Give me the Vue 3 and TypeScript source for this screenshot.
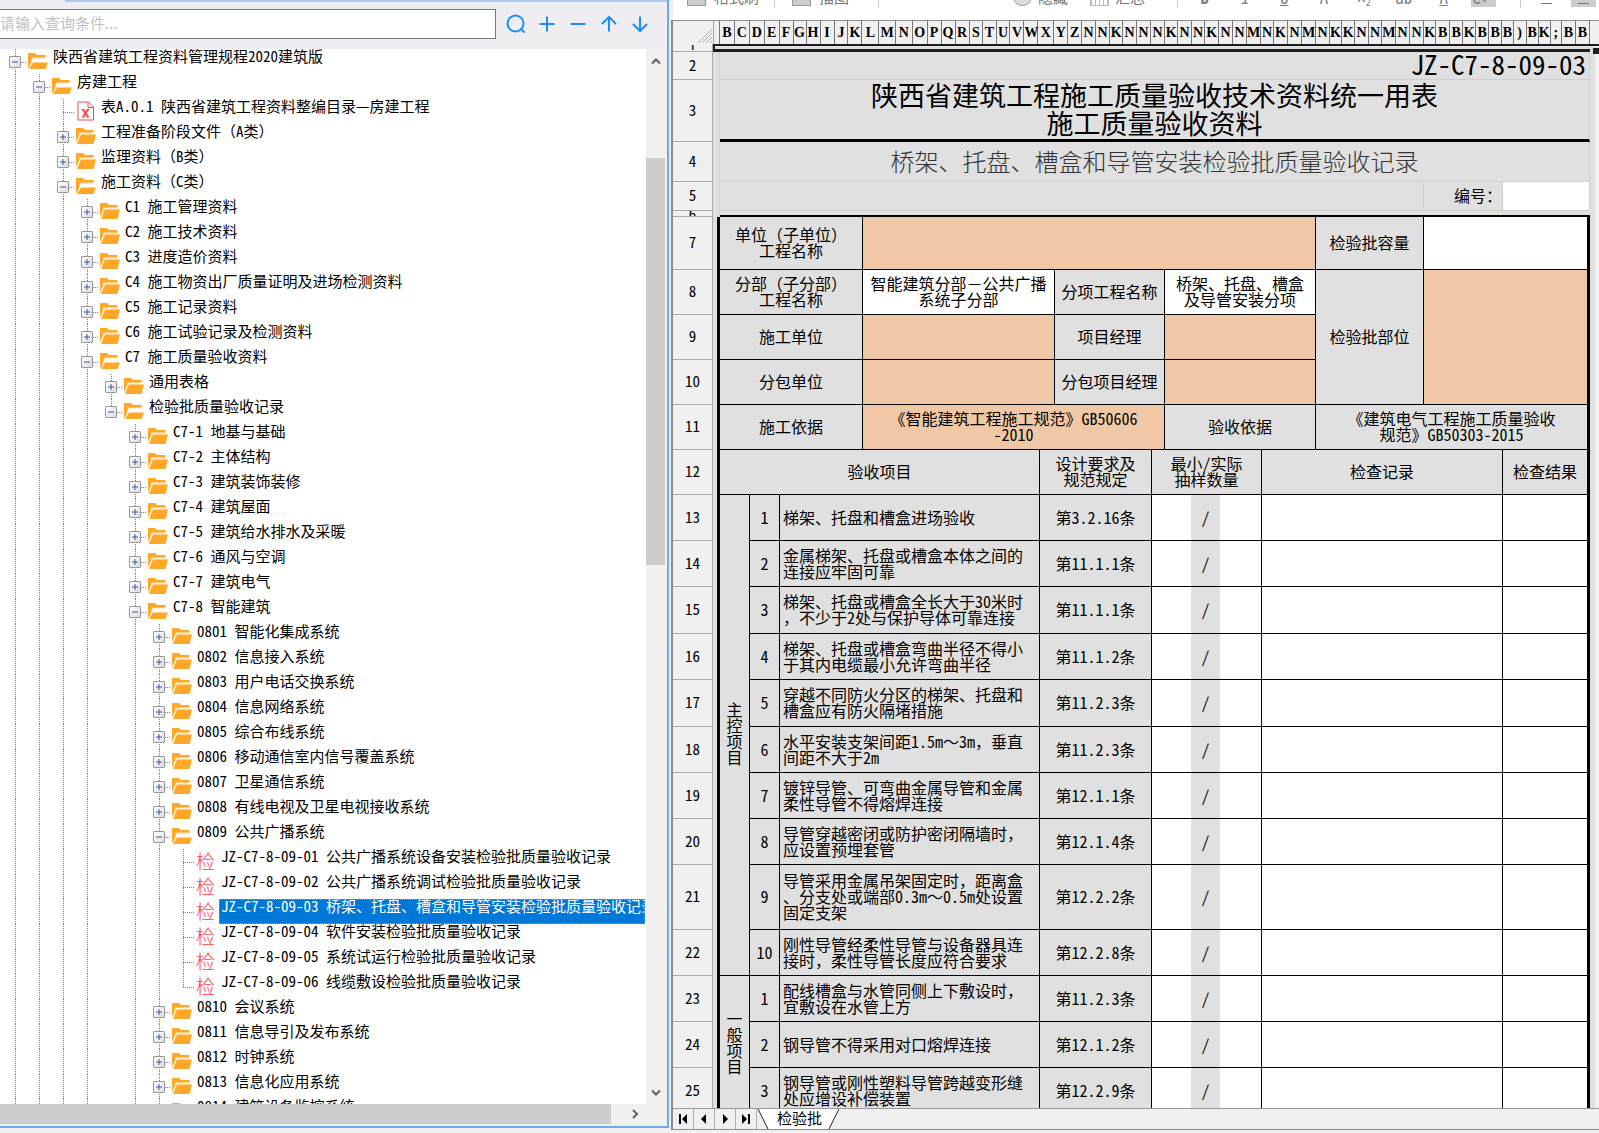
<script setup lang="ts">
import { h, ref } from 'vue'

type Kind = 'open' | 'closed' | 'doc' | 'check'
interface TreeNode { depth: number; kind: Kind; label: string }

const query = ref('')
const selected = ref('JZ-C7-8-09-03 桥架、托盘、槽盒和导管安装检验批质量验收记录')

// Sets letters and digits half an em wide while full-width punctuation keeps its em.
const Mixed = (props: { text: string }) =>
  h('span', props.text.split(/([（），：～－]+)/).map((part, i) => (i % 2 ? h('span', { class: 'fullwidth' }, part) : part)))
Mixed.props = ['text']

const n = (depth: number, kind: Kind, label: string): TreeNode => ({ depth, kind, label })

const nodes: TreeNode[] = [
  n(0, 'open', '陕西省建筑工程资料管理规程2020建筑版'),
  n(1, 'open', '房建工程'),
  n(2, 'doc', '表A.0.1 陕西省建筑工程资料整编目录—房建工程'),
  n(2, 'closed', '工程准备阶段文件（A类）'),
  n(2, 'closed', '监理资料（B类）'),
  n(2, 'open', '施工资料（C类）'),
  n(3, 'closed', 'C1 施工管理资料'),
  n(3, 'closed', 'C2 施工技术资料'),
  n(3, 'closed', 'C3 进度造价资料'),
  n(3, 'closed', 'C4 施工物资出厂质量证明及进场检测资料'),
  n(3, 'closed', 'C5 施工记录资料'),
  n(3, 'closed', 'C6 施工试验记录及检测资料'),
  n(3, 'open', 'C7 施工质量验收资料'),
  n(4, 'closed', '通用表格'),
  n(4, 'open', '检验批质量验收记录'),
  n(5, 'closed', 'C7-1 地基与基础'),
  n(5, 'closed', 'C7-2 主体结构'),
  n(5, 'closed', 'C7-3 建筑装饰装修'),
  n(5, 'closed', 'C7-4 建筑屋面'),
  n(5, 'closed', 'C7-5 建筑给水排水及采暖'),
  n(5, 'closed', 'C7-6 通风与空调'),
  n(5, 'closed', 'C7-7 建筑电气'),
  n(5, 'open', 'C7-8 智能建筑'),
  n(6, 'closed', '0801 智能化集成系统'),
  n(6, 'closed', '0802 信息接入系统'),
  n(6, 'closed', '0803 用户电话交换系统'),
  n(6, 'closed', '0804 信息网络系统'),
  n(6, 'closed', '0805 综合布线系统'),
  n(6, 'closed', '0806 移动通信室内信号覆盖系统'),
  n(6, 'closed', '0807 卫星通信系统'),
  n(6, 'closed', '0808 有线电视及卫星电视接收系统'),
  n(6, 'open', '0809 公共广播系统'),
  n(7, 'check', 'JZ-C7-8-09-01 公共广播系统设备安装检验批质量验收记录'),
  n(7, 'check', 'JZ-C7-8-09-02 公共广播系统调试检验批质量验收记录'),
  n(7, 'check', 'JZ-C7-8-09-03 桥架、托盘、槽盒和导管安装检验批质量验收记录'),
  n(7, 'check', 'JZ-C7-8-09-04 软件安装检验批质量验收记录'),
  n(7, 'check', 'JZ-C7-8-09-05 系统试运行检验批质量验收记录'),
  n(7, 'check', 'JZ-C7-8-09-06 线缆敷设检验批质量验收记录'),
  n(6, 'closed', '0810 会议系统'),
  n(6, 'closed', '0811 信息导引及发布系统'),
  n(6, 'closed', '0812 时钟系统'),
  n(6, 'closed', '0813 信息化应用系统'),
  n(6, 'closed', '0814 建筑设备监控系统'),
]

// Levels whose branch goes on below the last loaded node.
const unfinished = new Set([0, 1, 2, 3, 5, 6])

function continues(index: number, level: number): boolean {
  for (let i = index + 1; i < nodes.length; i++) {
    if (nodes[i].depth < level) return false
    if (nodes[i].depth === level) return true
  }
  return unfinished.has(level)
}

const letterWidths = [
  15, 15, 15, 15, 14, 13, 14, 14, 14, 14, 17, 17, 17, 15, 14, 14, 14, 14, 13, 14, 14, 14, 16, 14, 14,
  14, 14, 13, 14, 14, 14, 13, 14,
  13, 14, 14, 14, 14, 13, 14, 14, 14, 14, 12, 13, 14, 13, 14, 14, 14, 12,
  14, 13, 13, 13, 13, 11, 13, 12, 12, 11, 14, 14,
]
const letters = 'BCDEFGHIJKLMNOPQRSTUVWXYZNNKNNNKNNKNNMNKNMNKKNNMNNKBBKBBB)BK;BB'.split('')
const columns = letterWidths.map((width, i) => ({ width, letter: letters[i] }))

const cols = [40, 7, 30, 30, 83, 177, 15, 97, 13, 26, 29, 42, 54, 108, 79, 87, 9]

interface Item { row: number; no: number; text: string; rule: string; group?: string; span?: number; size?: string }
const items: Item[] = [
  { row: 13, no: 1, text: '梯架、托盘和槽盒进场验收', rule: '第3.2.16条', group: '主控项目', span: 10 },
  { row: 14, no: 2, text: '金属梯架、托盘或槽盒本体之间的\n连接应牢固可靠', rule: '第11.1.1条' },
  { row: 15, no: 3, text: '梯架、托盘或槽盒全长大于30米时\n，不少于2处与保护导体可靠连接', rule: '第11.1.1条', size: 'h47' },
  { row: 16, no: 4, text: '梯架、托盘或槽盒弯曲半径不得小\n于其内电缆最小允许弯曲半径', rule: '第11.1.2条' },
  { row: 17, no: 5, text: '穿越不同防火分区的梯架、托盘和\n槽盒应有防火隔堵措施', rule: '第11.2.3条', size: 'h47' },
  { row: 18, no: 6, text: '水平安装支架间距1.5m～3m，垂直\n间距不大于2m', rule: '第11.2.3条' },
  { row: 19, no: 7, text: '镀锌导管、可弯曲金属导管和金属\n柔性导管不得熔焊连接', rule: '第12.1.1条' },
  { row: 20, no: 8, text: '导管穿越密闭或防护密闭隔墙时，\n应设置预埋套管', rule: '第12.1.4条' },
  { row: 21, no: 9, text: '导管采用金属吊架固定时，距离盒\n、分支处或端部0.3m～0.5m处设置\n固定支架', rule: '第12.2.2条', size: 'h65' },
  { row: 22, no: 10, text: '刚性导管经柔性导管与设备器具连\n接时，柔性导管长度应符合要求', rule: '第12.2.8条' },
  { row: 23, no: 1, text: '配线槽盒与水管同侧上下敷设时，\n宜敷设在水管上方', rule: '第11.2.3条', group: '一般项目', span: 3 },
  { row: 24, no: 2, text: '钢导管不得采用对口熔焊连接', rule: '第12.1.2条' },
  { row: 25, no: 3, text: '钢导管或刚性塑料导管跨越变形缝\n处应增设补偿装置', rule: '第12.2.9条' },
]
</script>

<template>
  <div class="app">
    <section class="explorer">
      <div class="topline"></div>
      <form class="search" @submit.prevent>
        <input v-model="query" type="text" aria-label="查询条件" placeholder="请输入查询条件..." />
        <button type="submit" aria-label="查询">
          <svg width="22" height="22" viewBox="0 0 22 22"><circle cx="10.5" cy="10.5" r="8" /><path d="M15.5 15.5l4 4" /></svg>
        </button>
        <button type="button" aria-label="展开">
          <svg width="22" height="22" viewBox="0 0 22 22"><path d="M11 3.5v15M3.5 11h15" /></svg>
        </button>
        <button type="button" aria-label="收起">
          <svg width="22" height="22" viewBox="0 0 22 22"><path d="M3.5 11h15" /></svg>
        </button>
        <button type="button" aria-label="上一个">
          <svg width="22" height="22" viewBox="0 0 22 22"><path d="M11 18.500V4.500M4 11l7-7 7 7" /></svg>
        </button>
        <button type="button" aria-label="下一个">
          <svg width="22" height="22" viewBox="0 0 22 22"><path d="M11 3.500v14M4 11l7 7 7-7" /></svg>
        </button>
      </form>

      <div class="treearea">
        <ul class="tree" role="tree">
          <li v-for="(node, i) in nodes" :key="node.label" role="treeitem" class="node" @click="selected = node.label">
            <span v-for="level in node.depth" :key="level" class="guide" :class="{ line: continues(i, level - 1) }"></span>
            <span class="guide joint" :class="continues(i, node.depth) ? 'line' : 'half'">
              <button v-if="node.kind === 'open' || node.kind === 'closed'" type="button" class="toggle" :aria-label="node.kind === 'open' ? '收起' : '展开'">
                <svg width="10" height="10" viewBox="0 0 10 10">
                  <path d="M2 5h6" /><path v-if="node.kind === 'closed'" d="M5 2v6" />
                </svg>
              </button>
            </span>
            <svg v-if="node.kind === 'open'" class="icon" width="20" height="18" viewBox="0 0 20 18">
              <path fill="#ffa726" d="M0 1h7l2 2h8.500v3H5L1.200 15.500L0 16z" />
              <path fill="#fff" d="M4.500 6.500H18v3H4L2 14.500z" />
              <path fill="#ffe0b2" d="M4 5.500h13.500v1H4.500L2.500 12z" />
              <path fill="#ffa726" d="M5 10.500h15l-2.500 6.500H1z" />
            </svg>
            <svg v-else-if="node.kind === 'closed'" class="icon" width="20" height="18" viewBox="0 0 20 18">
              <path fill="#ffa726" d="M0 1h7l2 2h8.500v3H4L0 15.500z" />
              <path fill="#fff0d8" d="M3.500 5.500h15v2H5L1.500 16z" />
              <path fill="#ffa726" d="M5 7.500h15L17.500 17H1z" />
            </svg>
            <svg v-else-if="node.kind === 'doc'" class="icon doc" width="20" height="20" viewBox="0 0 20 20">
              <path d="M2 1h10.500l5 5v13H2z M12 1v5.500h5.500" />
              <path class="cross" d="M7 8.500l5 7.500M12 8.500l-5 7.500" />
              <path d="M5.500 8.500h3M10.500 8.500h3M5.500 16h3M10.500 16h3" />
            </svg>
            <span v-else class="icon check">检</span>
            <span class="label" :class="{ selected: node.label === selected }"><Mixed :text="node.label" /></span>
          </li>
        </ul>
        <div class="vbar">
          <svg width="12" height="12" viewBox="0 0 12 12"><path d="M2 8.500l4-4 4 4" /></svg>
          <div class="vthumb"></div>
          <svg class="down" width="12" height="12" viewBox="0 0 12 12"><path d="M2 3.500l4 4 4-4" /></svg>
        </div>
      </div>
      <div class="hbar">
        <div class="hthumb"></div>
        <svg width="12" height="12" viewBox="0 0 12 12"><path d="M4 2l4 4-4 4" /></svg>
      </div>
    </section>

    <section class="workbook">
      <div class="toolbar">
        <button type="button" class="tool t1"><i class="glyph solid"></i>格式刷</button>
        <i class="sep"></i>
        <button type="button" class="tool t2"><i class="glyph solid"></i>插图</button>
        <i class="sep"></i>
        <button type="button" class="tool t3"><i class="glyph eye"></i>隐藏</button>
        <button type="button" class="tool t4"><i class="glyph bars"></i>汇总</button>
        <i class="sep"></i>
        <div class="formats">
          <button type="button" class="fmt"><b>B</b></button>
          <button type="button" class="fmt"><em>I</em></button>
          <button type="button" class="fmt"><u>U</u></button>
          <button type="button" class="fmt">A</button>
          <button type="button" class="fmt">X<sub>2</sub></button>
          <button type="button" class="fmt">ab</button>
          <button type="button" class="fmt"><u>A</u></button>
          <button type="button" class="fmt on">C↵</button>
        </div>
        <i class="sep"></i>
        <div class="aligns">
          <button type="button" class="fmt" aria-label="左对齐"><i class="dash"></i></button>
          <button type="button" class="fmt on" aria-label="居中"><i class="dash"></i></button>
        </div>
      </div>

      <div class="sheet">
        <div class="colhead">
          <div class="corner">
            <svg width="16" height="16" viewBox="0 0 16 16"><path d="M1 15L15 1M5 15L15 5M9 15l6-6M13 15l2-2" /></svg>
          </div>
          <div class="first"></div>
          <div class="letters">
            <span v-for="(c, i) in columns" :key="i" :style="{ flexGrow: c.width }">{{ c.letter }}</span>
          </div>
          <div class="end"></div>
        </div>

        <div class="gridwrap">
          <table class="grid">
            <colgroup><col v-for="(w, i) in cols" :key="i" :style="{ width: w + 'px' }" /></colgroup>
            <tbody>
              <tr class="h8"><th><div class="clip">1</div></th><td colspan="15" class="active"></td><td class="tail handle"></td></tr>
              <tr class="h28"><th>2</th><td class="a"></td><td colspan="14" class="pale code">JZ-C7-8-09-03</td><td class="tail"></td></tr>
              <tr class="h62"><th>3</th><td class="a"></td><td colspan="14" class="title">陕西省建筑工程施工质量验收技术资料统一用表<br />施工质量验收资料</td><td class="tail"></td></tr>
              <tr class="h40"><th>4</th><td class="a"></td><td colspan="14" class="pale subtitle">桥架、托盘、槽盒和导管安装检验批质量验收记录</td><td class="tail"></td></tr>
              <tr class="h29"><th>5</th><td class="a"></td><td colspan="12" class="pale"></td><td class="pale serial"><Mixed text="编号：" /></td><td class="pale white"></td><td class="tail"></td></tr>
              <tr class="h6"><th><div class="clip">6</div></th><td class="a"></td><td colspan="14" class="rule"></td><td class="tail"></td></tr>
              <tr class="h53">
                <th>7</th><td class="a thick"></td>
                <td colspan="3" class="name"><Mixed text="单位（子单位）" /><br />工程名称</td><td colspan="8" class="fill"></td>
                <td>检验批容量</td><td colspan="2" class="white last"></td><td class="tail"></td>
              </tr>
              <tr class="h45">
                <th>8</th><td class="a thick"></td>
                <td colspan="3" class="name"><Mixed text="分部（子分部）" /><br />工程名称</td>
                <td colspan="2" class="white"><Mixed text="智能建筑分部－公共广播" /><br />系统子分部</td>
                <td colspan="2">分项工程名称</td><td colspan="4" class="white">桥架、托盘、槽盒<br />及导管安装分项</td>
                <td rowspan="3">检验批部位</td><td colspan="2" rowspan="3" class="fill last"></td><td class="tail"></td>
              </tr>
              <tr class="h45">
                <th>9</th><td class="a thick"></td>
                <td colspan="3">施工单位</td><td colspan="2" class="fill"></td><td colspan="2">项目经理</td><td colspan="4" class="fill"></td><td class="tail"></td>
              </tr>
              <tr class="h45">
                <th>10</th><td class="a thick"></td>
                <td colspan="3">分包单位</td><td colspan="2" class="fill"></td><td colspan="2">分包项目经理</td><td colspan="4" class="fill"></td><td class="tail"></td>
              </tr>
              <tr class="h45">
                <th>11</th><td class="a thick"></td>
                <td colspan="3">施工依据</td><td colspan="4" class="fill">《智能建筑工程施工规范》GB50606<br />-2010</td>
                <td colspan="4">验收依据</td><td colspan="3" class="last">《建筑电气工程施工质量验收<br />规范》GB50303-2015</td><td class="tail"></td>
              </tr>
              <tr class="h45">
                <th>12</th><td class="a thick"></td>
                <td colspan="4">验收项目</td><td colspan="2">设计要求及<br />规范规定</td><td colspan="4">最小/实际<br />抽样数量</td>
                <td colspan="3">检查记录</td><td class="last">检查结果</td><td class="tail"></td>
              </tr>
              <tr v-for="item in items" :key="item.row" :class="item.size || 'h46'">
                <th>{{ item.row }}</th><td class="a thick"></td>
                <td v-if="item.group" :rowspan="item.span"><span class="group">{{ item.group }}</span></td>
                <td>{{ item.no }}</td>
                <td colspan="2" class="text"><Mixed :text="item.text" /></td>
                <td colspan="2">{{ item.rule }}</td>
                <td colspan="2" class="white open"></td>
                <td class="open slash">/</td>
                <td class="white"></td>
                <td colspan="3" class="white"></td>
                <td class="white last"></td>
                <td class="tail"></td>
              </tr>
            </tbody>
          </table>
        </div>

        <div class="tabs">
          <button type="button" aria-label="第一张"><svg width="12" height="12" viewBox="0 0 12 12"><path d="M2 1h2v10H2zM10 1v10L5 6z" /></svg></button>
          <button type="button" aria-label="上一张"><svg width="12" height="12" viewBox="0 0 12 12"><path d="M8 1v10L3 6z" /></svg></button>
          <button type="button" aria-label="下一张"><svg width="12" height="12" viewBox="0 0 12 12"><path d="M4 1v10l5-5z" /></svg></button>
          <button type="button" aria-label="最后一张"><svg width="12" height="12" viewBox="0 0 12 12"><path d="M8 1h2v10H8zM2 1v10l5-5z" /></svg></button>
          <div class="tab">
            <svg width="82" height="20" viewBox="0 0 82 20"><path d="M1 0l10 20h61L82 0z" fill="#fff" /><path d="M1 0l10 20M72 20L82 0" stroke="#222" fill="none" /></svg>
            <a href="#sheet">检验批</a>
          </div>
        </div>
      </div>
    </section>
  </div>
</template>

<style>
body {
  margin: 0;
  background: #f0f0f0;
}
.fullwidth {
  font-feature-settings: normal;
}
</style>

<style scoped>
* {
  box-sizing: border-box;
}
.app {
  display: grid;
  grid-template-columns: minmax(0, 671fr) minmax(0, 928fr);
  height: 100vh;
  overflow: hidden;
  background: #f0f0f0;
  color: #000;
  font-family: "Noto Sans CJK SC", sans-serif;
  font-size: 15px;
  font-feature-settings: "hwid";
}
button {
  padding: 0;
  border: 0;
  background: none;
  font: inherit;
  font-feature-settings: inherit;
}
svg {
  display: block;
}

/* explorer */
.explorer {
  display: flex;
  flex-direction: column;
  margin: 0 2px 5px 0;
  border-right: 2px solid #75a5f5;
  border-bottom: 2px solid #75a5f5;
  background: #ededf2;
  overflow: hidden;
}
.topline {
  flex: none;
  height: 2px;
  margin-left: 65px;
  background: #aac8f0;
}
.search {
  display: flex;
  align-items: center;
  flex: none;
  height: 47px;
  padding: 0 12px 3px 0;
}
.search input {
  flex: 1;
  min-width: 0;
  height: 30px;
  margin-right: 4px;
  padding: 0 0 4px;
  border: 1px solid #7a7a7a;
  border-left: 0;
  outline: 0;
  background: #fff;
  font: inherit;
  font-feature-settings: normal;
}
.search input::placeholder {
  color: #c0c0c0;
}
.search button {
  display: flex;
  justify-content: center;
  width: 31px;
}
.search svg {
  fill: none;
  stroke: #1e8cff;
  stroke-width: 2;
}
.treearea {
  display: flex;
  flex: 1;
  min-height: 0;
  background: #fff;
}
.tree {
  flex: 1;
  min-width: 0;
  margin: 0 1px 0 0;
  padding: 0;
  list-style: none;
  overflow: hidden;
}
.node {
  display: flex;
  height: 25px;
  padding-left: 2px;
  white-space: nowrap;
}
.guide {
  display: flex;
  align-items: center;
  justify-content: center;
  flex: none;
  width: 24px;
  height: 25px;
}
.line,
.half {
  background: repeating-linear-gradient(#808080 0 1px, #fff 1px 2px) 13px 0 / 1px 100% no-repeat;
}
.half {
  background-size: 1px 13px;
}
.joint {
  position: relative;
}
.joint::after {
  content: "";
  position: absolute;
  left: 13px;
  right: 0;
  top: 13px;
  height: 1px;
  background: repeating-linear-gradient(90deg, #808080 0 1px, #fff 1px 2px);
}
.toggle {
  position: relative;
  z-index: 1;
  width: 12px;
  height: 12px;
  margin-left: 2px;
  border: 1px solid #989898;
  border-radius: 1px;
  background: linear-gradient(135deg, #fff, #dcdcdc);
}
.toggle svg {
  stroke: #3c58a8;
  stroke-width: 1;
}
.icon {
  flex: none;
  width: 20px;
  margin: 3px 3px 0 2px;
}
.doc {
  margin-top: 2px;
  fill: none;
  stroke: #f8464e;
}
.doc .cross {
  stroke-width: 2;
}
.check {
  margin-top: 2px;
  color: #ff3c3c;
  font-size: 19px;
  font-weight: 300;
  line-height: 20px;
}
.label {
  height: 25px;
  padding-left: 2px;
  line-height: 14px;
}
.label.selected {
  flex: 1;
  min-width: 0;
  overflow: hidden;
  background: #0078d7;
  color: #fff;
  outline: 1px dotted #e0853a;
  outline-offset: -1px;
}
.vbar {
  display: flex;
  flex-direction: column;
  align-items: center;
  flex: none;
  width: 21px;
  padding: 6px 2px 5px 0;
  background: #f0f0f0;
}
.vbar svg,
.hbar svg {
  fill: none;
  stroke: #606060;
  stroke-width: 2;
}
.vthumb {
  width: 19px;
  height: 39%;
  margin-top: 91px;
  background: #cdcdcd;
}
.down {
  margin-top: auto;
}
.hbar {
  display: flex;
  align-items: center;
  flex: none;
  gap: 18px;
  height: 22px;
  padding: 0 26px 2px 0;
  background: #f0f0f0;
}
.hthumb {
  flex: 1;
  height: 20px;
  background: #cdcdcd;
}

/* toolbar */
.workbook {
  display: flex;
  flex-direction: column;
  min-height: 0;
  padding-bottom: 3px;
}
.toolbar {
  display: flex;
  flex: none;
  height: 20px;
  margin-left: 2px;
  background: #fff;
  color: #808080;
  line-height: 20px;
  overflow: hidden;
}
.tool {
  display: flex;
  align-items: flex-start;
  flex: none;
  height: 20px;
  margin-top: -13px;
  color: #777;
  line-height: 20px;
}
.t1 { margin-left: 14px; margin-right: 15px; }
.t2 { margin-left: 17px; margin-right: 29px; }
.t3 { margin-left: 134px; }
.t4 { margin-left: 22px; margin-right: 32px; }
.glyph {
  width: 19px;
  height: 19px;
  margin-right: 8px;
  border: 1px solid #999;
}
.solid {
  background: #ccc;
}
.eye {
  border-radius: 0 0 9px 9px;
  background: #ddd;
  margin-right: 6px;
}
.bars {
  border-color: #bbb;
  background: repeating-linear-gradient(90deg, #bbb 0 1px, #fff 1px 4px);
  margin-right: 6px;
}
.sep {
  flex: none;
  width: 1px;
  height: 8px;
  background: #c8c8c8;
}
.formats {
  display: flex;
  flex: 1;
  justify-content: space-between;
  padding: 0 24px 0 14px;
}
.aligns {
  display: flex;
  flex: none;
  gap: 12px;
  padding: 0 3px 0 13px;
}
.fmt {
  width: 25px;
  height: 20px;
  margin-top: -13px;
  color: #808080;
  font-size: 17px;
  line-height: 16px;
}
.fmt sub {
  font-size: 10px;
  line-height: 10px;
}
.on {
  background: #ccc;
}
.dash {
  display: block;
  width: 11px;
  height: 1px;
  margin: 13px auto 0;
  background: #777;
}

/* sheet */
.sheet {
  display: flex;
  flex-direction: column;
  flex: 1;
  min-height: 0;
  border: solid #8c8c8c;
  border-width: 1px 0 1px 2px;
}
.colhead {
  display: flex;
  flex: none;
  height: 23px;
  background: #f0f0f0;
}
.corner {
  display: flex;
  align-items: flex-end;
  justify-content: flex-end;
  flex: none;
  width: 41px;
  border-right: 1px solid #aaa;
}
.corner svg {
  fill: none;
  stroke: #aaa;
}
.first {
  flex: none;
  width: 6px;
  border-right: 1px solid #777;
}
.letters {
  display: flex;
  flex: 1;
  min-width: 0;
  font: bold 14px/24px "Liberation Serif", serif;
  text-align: center;
}
.letters span {
  flex: 1 1 0;
  min-width: 0;
  border-right: 1px solid #777;
}
.end {
  flex: none;
  width: 9px;
}
.gridwrap {
  flex: 1;
  min-height: 0;
  overflow: hidden;
}
.grid {
  width: 100%;
  table-layout: fixed;
  border-collapse: separate;
  border-spacing: 0;
  font-size: 16px;
  line-height: 16px;
}
.grid th,
.grid td {
  padding: 0 0 2px;
  border: solid #000;
  border-width: 0 1px 1px 0;
  background: #e0e0e0;
  text-align: center;
  vertical-align: middle;
  white-space: nowrap;
}
.grid th {
  border-color: #a8a8a8;
  background: #f0f0f0;
  font-size: 15px;
  font-weight: 400;
}
.grid .h6 th,
.grid .h8 th {
  padding: 0;
}
.clip {
  height: 5px;
  line-height: 5px;
  overflow: hidden;
}
.grid .a {
  border-width: 0 1px 0 0;
  border-color: #d4d2ca;
}
.grid .thick {
  border-right: 3px solid #000;
}
.grid .last {
  border-right: 3px solid #000;
}
.grid .tail {
  border-width: 0 4px 0 0;
  border-color: #f0f0f0;
}
.grid .active {
  border: solid #1e1e22;
  border-width: 2px 0 3px 2px;
}
.grid .handle {
  position: relative;
}
.handle::before {
  content: "";
  position: absolute;
  left: 0;
  right: -4px;
  top: 0;
  height: 2px;
  background: #1e1e22;
}
.handle::after {
  content: "";
  position: absolute;
  right: -4px;
  top: 4px;
  width: 6px;
  height: 6px;
  background: #1e1e22;
}
.grid .pale {
  border-color: #d2d1c8;
}
.grid .white {
  background: #fff;
}
.grid .fill {
  background: #f0c8a5;
}
.grid .code {
  padding: 0 3px 3px 0;
  font-size: 27px;
  line-height: 22px;
  text-align: right;
}
.grid .title {
  border-bottom: 3px solid #000;
  border-right-color: #d2d1c8;
  font-size: 27px;
  line-height: 28px;
}
.grid .subtitle {
  color: #333;
  font-size: 24px;
  font-weight: 300;
  line-height: 32px;
}
.grid .serial {
  text-align: right;
}
.grid .rule {
  border-width: 0 0 2px;
}
.grid .text {
  padding-left: 3px;
  text-align: left;
  white-space: pre;
}
.grid .open {
  border-right: 0;
}
.group {
  writing-mode: vertical-rl;
}
.h6 { height: 6px; }
.h8 { height: 8px; }
.h28 { height: 28px; }
.h29 { height: 29px; }
.h40 { height: 40px; }
.h45 { height: 45px; }
.h46 { height: 46px; }
.h47 { height: 47px; }
.h53 { height: 53px; }
.h62 { height: 62px; }
.h65 { height: 65px; }

.tabs {
  display: flex;
  flex: none;
  height: 21px;
  border-top: 1px solid #999;
  background: #f0f0f0;
}
.tabs button {
  display: flex;
  align-items: center;
  justify-content: center;
  width: 21px;
  border-right: 1px solid #b0b0b0;
}
.tab {
  position: relative;
  width: 82px;
}
.tab a {
  position: absolute;
  left: 20px;
  top: 0;
  color: #000;
  line-height: 17px;
  text-decoration: none;
}
</style>
